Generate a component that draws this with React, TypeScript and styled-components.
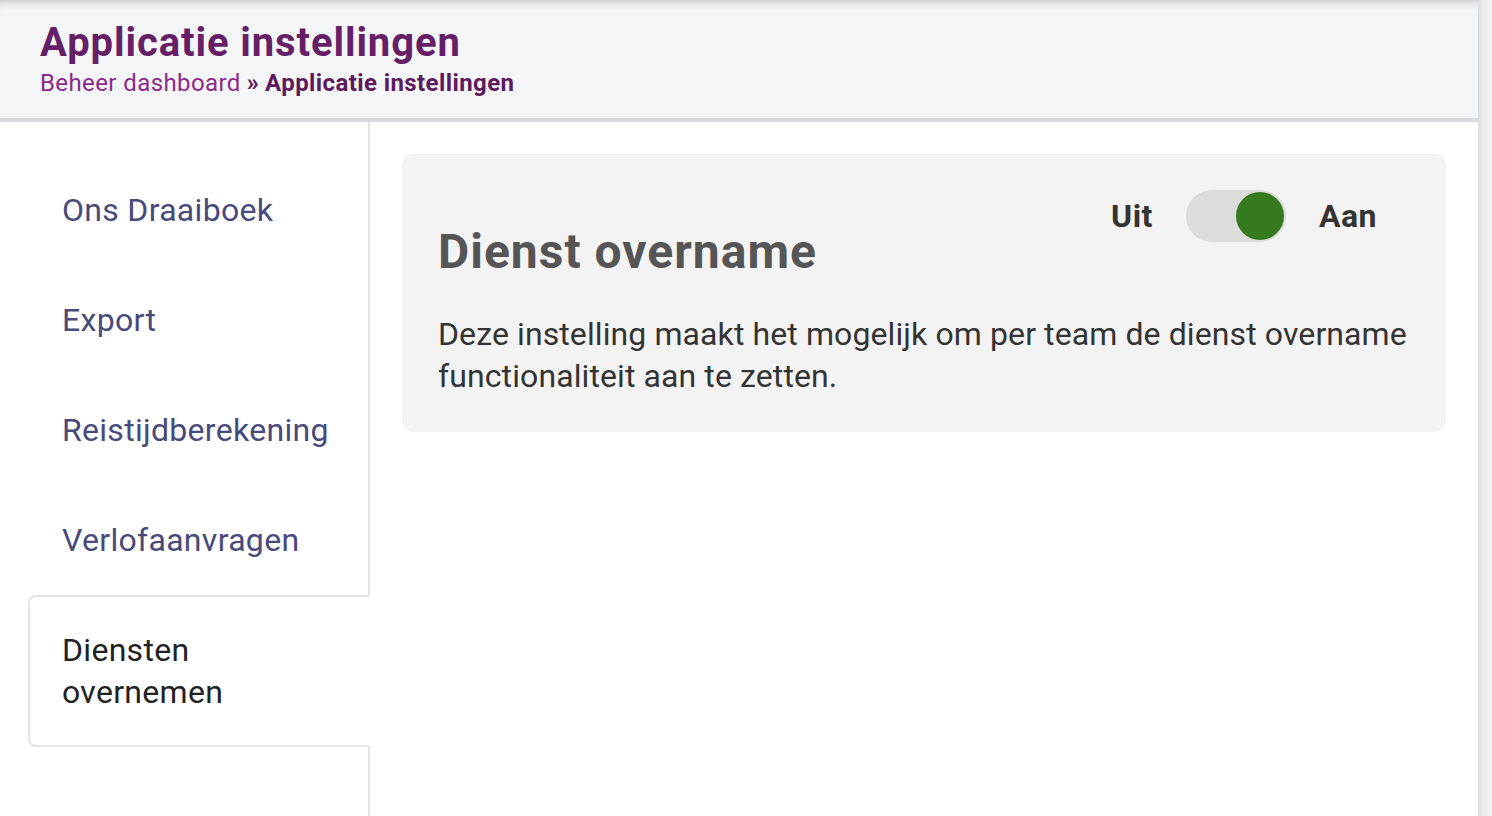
import React from "react";
import styled, { createGlobalStyle } from "styled-components";

const GlobalStyle = createGlobalStyle`
  html, body {
    margin: 0;
    padding: 0;
    background: #ffffff;
  }
  body {
    font-family: Roboto, "Noto Sans", "Liberation Sans", sans-serif;
    -webkit-font-smoothing: antialiased;
  }
  * { box-sizing: border-box; }
`;

const Shell = styled.div`
  display: flex;
  height: 816px;
  overflow: hidden;
`;

const Page = styled.div`
  flex: 1;
  min-width: 0;
  display: flex;
  flex-direction: column;
  background: #ffffff;
`;

const Gutter = styled.div`
  width: 14px;
  flex-shrink: 0;
  background: linear-gradient(to right, #dcdcdc 0%, #ececec 35%, #f4f4f4 100%);
`;

const Header = styled.header`
  height: 122px;
  padding: 20px 40px 0;
  background: #f4f5f7;
  border-bottom: 4px solid #d9dae0;
  box-shadow: inset 0 9px 9px -7px rgba(0, 0, 0, 0.2);
`;

const Title = styled.h1`
  margin: 0;
  font-size: 40px;
  line-height: 46px;
  font-weight: 700;
  letter-spacing: 0.9px;
  color: #661f66;
`;

const Breadcrumb = styled.nav`
  margin-top: 3px;
  font-size: 24px;
  line-height: 28px;
  letter-spacing: 0.4px;
  color: #8b2a8b;
`;

const Crumb = styled.a`
  color: #8b2a8b;
  text-decoration: none;
`;

const CrumbSep = styled.span`
  font-weight: 700;
  color: #5e1a5e;
  margin: 0 6px;
`;

const CrumbCurrent = styled.strong`
  font-weight: 700;
  color: #5e1a5e;
`;

const Body = styled.div`
  flex: 1;
  display: flex;
  min-height: 0;
`;

const Sidebar = styled.aside`
  width: 370px;
  flex-shrink: 0;
  padding: 33px 0 0 28px;
  border-right: 2px solid #e5e5e5;
  display: flex;
  flex-direction: column;
`;

const NavItem = styled.a<{ $active?: boolean }>`
  display: block;
  padding: 32px;
  font-size: 32px;
  line-height: 42px;
  letter-spacing: 0.3px;
  text-decoration: none;
  border: 2px solid ${(p) => (p.$active ? "#e5e5e5" : "transparent")};
  border-right: none;
  border-radius: 8px 0 0 8px;
  background: #ffffff;
  color: ${(p) => (p.$active ? "#222222" : "#484a7b")};
  margin-right: ${(p) => (p.$active ? "-2px" : "0")};
  position: relative;
  z-index: ${(p) => (p.$active ? 1 : 0)};
`;

const Main = styled.main`
  flex: 1;
  padding: 32px;
  min-width: 0;
`;

const Card = styled.section`
  background: #f3f3f3;
  border-radius: 10px;
  padding: 36px 36px 35px;
`;

const CardHead = styled.div`
  display: flex;
  justify-content: space-between;
  align-items: flex-start;
`;

const CardTitle = styled.h2`
  margin: 33px 0 0;
  font-size: 48px;
  line-height: 58px;
  font-weight: 700;
  letter-spacing: 1px;
  color: #555555;
`;

const ToggleGroup = styled.div`
  display: flex;
  align-items: center;
  gap: 33px;
  margin-right: 33px;
`;

const ToggleLabel = styled.span`
  font-size: 32px;
  line-height: 52px;
  font-weight: 700;
  letter-spacing: 0.5px;
  color: #333333;
`;

const Switch = styled.button<{ $on: boolean }>`
  width: 100px;
  height: 52px;
  padding: 2px;
  border: none;
  border-radius: 26px;
  background: #dcdcdc;
  display: flex;
  justify-content: ${(p) => (p.$on ? "flex-end" : "flex-start")};
  cursor: pointer;
`;

const Knob = styled.span`
  width: 48px;
  height: 48px;
  border-radius: 50%;
  background: #367a20;
`;

const Description = styled.p`
  margin: 32px 0 0;
  font-size: 32px;
  line-height: 42px;
  letter-spacing: 0.1px;
  color: #333333;
`;

const navItems = [
  "Ons Draaiboek",
  "Export",
  "Reistijdberekening",
  "Verlofaanvragen",
  "Diensten overnemen",
];

export default function App() {
  const [on, setOn] = React.useState(true);
  return (
    <>
      <GlobalStyle />
      <Shell>
        <Page>
          <Header>
            <Title>Applicatie instellingen</Title>
            <Breadcrumb>
              <Crumb href="#">Beheer dashboard</Crumb>
              <CrumbSep>»</CrumbSep>
              <CrumbCurrent>Applicatie instellingen</CrumbCurrent>
            </Breadcrumb>
          </Header>
          <Body>
            <Sidebar>
              {navItems.map((item) => (
                <NavItem
                  key={item}
                  href="#"
                  $active={item === "Diensten overnemen"}
                >
                  {item === "Diensten overnemen" ? (
                    <>
                      Diensten
                      <br />
                      overnemen
                    </>
                  ) : (
                    item
                  )}
                </NavItem>
              ))}
            </Sidebar>
            <Main>
              <Card>
                <CardHead>
                  <CardTitle>Dienst overname</CardTitle>
                  <ToggleGroup>
                    <ToggleLabel>Uit</ToggleLabel>
                    <Switch
                      type="button"
                      role="switch"
                      aria-checked={on}
                      $on={on}
                      onClick={() => setOn(!on)}
                    >
                      <Knob />
                    </Switch>
                    <ToggleLabel>Aan</ToggleLabel>
                  </ToggleGroup>
                </CardHead>
                <Description>
                  Deze instelling maakt het mogelijk om per team de dienst
                  overname functionaliteit aan te zetten.
                </Description>
              </Card>
            </Main>
          </Body>
        </Page>
        <Gutter />
      </Shell>
    </>
  );
}
